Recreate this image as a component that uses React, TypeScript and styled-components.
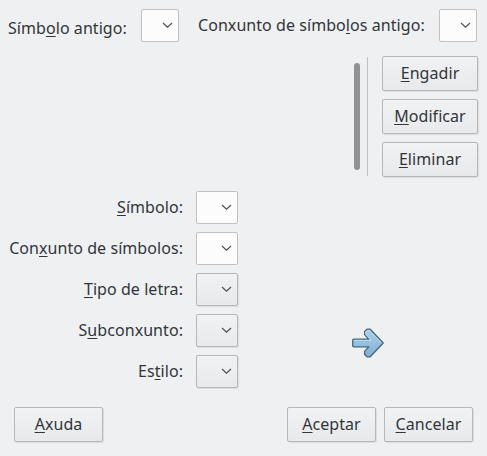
import React from "react";
import styled, { createGlobalStyle } from "styled-components";

const GlobalStyle = createGlobalStyle`
  * { box-sizing: border-box; }
  body {
    margin: 0;
    background: #eff0f1;
    color: #31363b;
    font: 16px/22px "Noto Sans", sans-serif;
    letter-spacing: 0.06px;
  }
`;

const Dialog = styled.main`
  width: 487px;
  height: 456px;
  overflow: hidden;
  display: flex;
  flex-direction: column;
  background: #eff0f1;
`;

const Header = styled.header`
  display: flex;
  align-items: flex-start;
  height: 56px;
  padding: 9px 10px 0 8px;
`;

const Field = styled.div<{ $labelTop: number }>`
  display: flex;
  justify-content: space-between;
  & > label { padding-top: ${(p) => p.$labelTop}px; }
`;

const OldSymbol = styled(Field)`
  width: 171px;
  margin-right: 19px;
`;

const OldSet = styled(Field)`
  width: 279px;
`;

const Label = styled.label`
  white-space: nowrap;
`;

const Key = styled.span`
  text-decoration: underline;
  text-decoration-thickness: 1px;
  text-underline-offset: 2px;
  text-decoration-skip-ink: none;
`;

const Combo = styled.button<{ $wide?: boolean; $raised?: boolean }>`
  display: flex;
  align-items: center;
  justify-content: flex-end;
  flex: none;
  width: ${(p) => (p.$wide ? 42 : 38)}px;
  height: 33px;
  padding: 0 5px 2px 0;
  border: 1px solid ${(p) => (p.$raised ? "#b5b7b9" : "#bfc1c3")};
  border-radius: 2px;
  background: ${(p) => (p.$raised ? "linear-gradient(#f1f2f3, #e8e9ea)" : "#fcfcfc")};
  box-shadow: ${(p) => (p.$raised ? "1px 1px 0 #dcddde" : "none")};
`;

const ListRow = styled.section`
  display: flex;
  justify-content: flex-end;
  height: 135px;
  padding-right: 9px;
`;

const ScrollBar = styled.div`
  width: 6px;
  height: 107px;
  margin: 7px 7px 0 0;
  border-radius: 3px;
  background: #909395;
`;

const Divider = styled.div`
  width: 1px;
  height: 119px;
  margin: 1px 14px 0 0;
  background: #bfc1c3;
`;

const Actions = styled.div`
  display: flex;
  flex-direction: column;
  gap: 8px;
  width: 96px;
`;

const PushButton = styled.button`
  width: 100%;
  height: 35px;
  padding: 0 0 2px;
  border: 1px solid #b5b7b9;
  border-radius: 2px;
  background: linear-gradient(#f1f2f3, #e8e9ea);
  box-shadow: 1px 1px 0 #dcddde;
  color: inherit;
  font: inherit;
  letter-spacing: inherit;
`;

const Details = styled.section`
  display: flex;
  height: 216px;
`;

const Form = styled.div`
  display: grid;
  grid-template-columns: 183px 42px;
  grid-auto-rows: 33px;
  gap: 8px 13px;
  align-content: start;
  width: 352px;
  & > label { justify-self: end; padding-top: 5px; }
`;

const Arrow = styled.svg`
  margin-top: 137px;
`;

const Footer = styled.footer`
  display: grid;
  grid-template-columns: 89px 184px 89px 8px 89px;
  padding-left: 14px;
`;

const AcceptSlot = styled.div`
  grid-column: 3;
`;

const CancelSlot = styled.div`
  grid-column: 5;
`;

function Mnemonic({ text, at }: { text: string; at: number }) {
  return (
    <>
      {text.slice(0, at)}
      <Key>{text[at]}</Key>
      {text.slice(at + 1)}
    </>
  );
}

function Chevron() {
  return (
    <svg width="11" height="8" viewBox="0 0 11 8" fill="none">
      <path d="M1 2 5.5 6.2 10 2" stroke="#4b5054" strokeWidth="1.2" />
    </svg>
  );
}

const fields = [
  { text: "Símbolo:", at: 0, raised: false },
  { text: "Conxunto de símbolos:", at: 3, raised: false },
  { text: "Tipo de letra:", at: 0, raised: true },
  { text: "Subconxunto:", at: 1, raised: true },
  { text: "Estilo:", at: 2, raised: true },
];

export default function App() {
  return (
    <Dialog>
      <GlobalStyle />
      <Header>
        <OldSymbol $labelTop={8}>
          <Label><Mnemonic text="Símbolo antigo:" at={4} /></Label>
          <Combo><Chevron /></Combo>
        </OldSymbol>
        <OldSet $labelTop={5}>
          <Label><Mnemonic text="Conxunto de símbolos antigo:" at={17} /></Label>
          <Combo><Chevron /></Combo>
        </OldSet>
      </Header>
      <ListRow>
        <ScrollBar />
        <Divider />
        <Actions>
          {["Engadir", "Modificar", "Eliminar"].map((text) => (
            <PushButton key={text}><Mnemonic text={text} at={0} /></PushButton>
          ))}
        </Actions>
      </ListRow>
      <Details>
        <Form>
          {fields.map((f) => (
            <React.Fragment key={f.text}>
              <Label><Mnemonic text={f.text} at={f.at} /></Label>
              <Combo $wide $raised={f.raised}><Chevron /></Combo>
            </React.Fragment>
          ))}
        </Form>
        <Arrow width="32" height="30" viewBox="0 0 32 30">
          <defs>
            <linearGradient id="arrowFill" x1="0" y1="0" x2="0" y2="1">
              <stop offset="0" stopColor="#add0e8" />
              <stop offset="1" stopColor="#7fb0d6" />
            </linearGradient>
          </defs>
          <path
            d="M1.5 11.2H16.8L12.6 6.6V3.4L15 1.2H18.2L31.2 15 18.2 28.8H15L12.6 26.6V23.4L16.8 18.8H1.5L.7 18V12Z"
            fill="url(#arrowFill)"
            stroke="#456781"
            strokeWidth="1.3"
            strokeLinejoin="round"
          />
          <path d="M2 12.4H19L13.9 6.3V3.9L15.6 2.5H17.5L29 14.5" fill="none" stroke="#c7e0f1" strokeWidth=".8" />
        </Arrow>
      </Details>
      <Footer>
        <PushButton><Mnemonic text="Axuda" at={0} /></PushButton>
        <AcceptSlot><PushButton><Mnemonic text="Aceptar" at={0} /></PushButton></AcceptSlot>
        <CancelSlot><PushButton><Mnemonic text="Cancelar" at={0} /></PushButton></CancelSlot>
      </Footer>
    </Dialog>
  );
}
